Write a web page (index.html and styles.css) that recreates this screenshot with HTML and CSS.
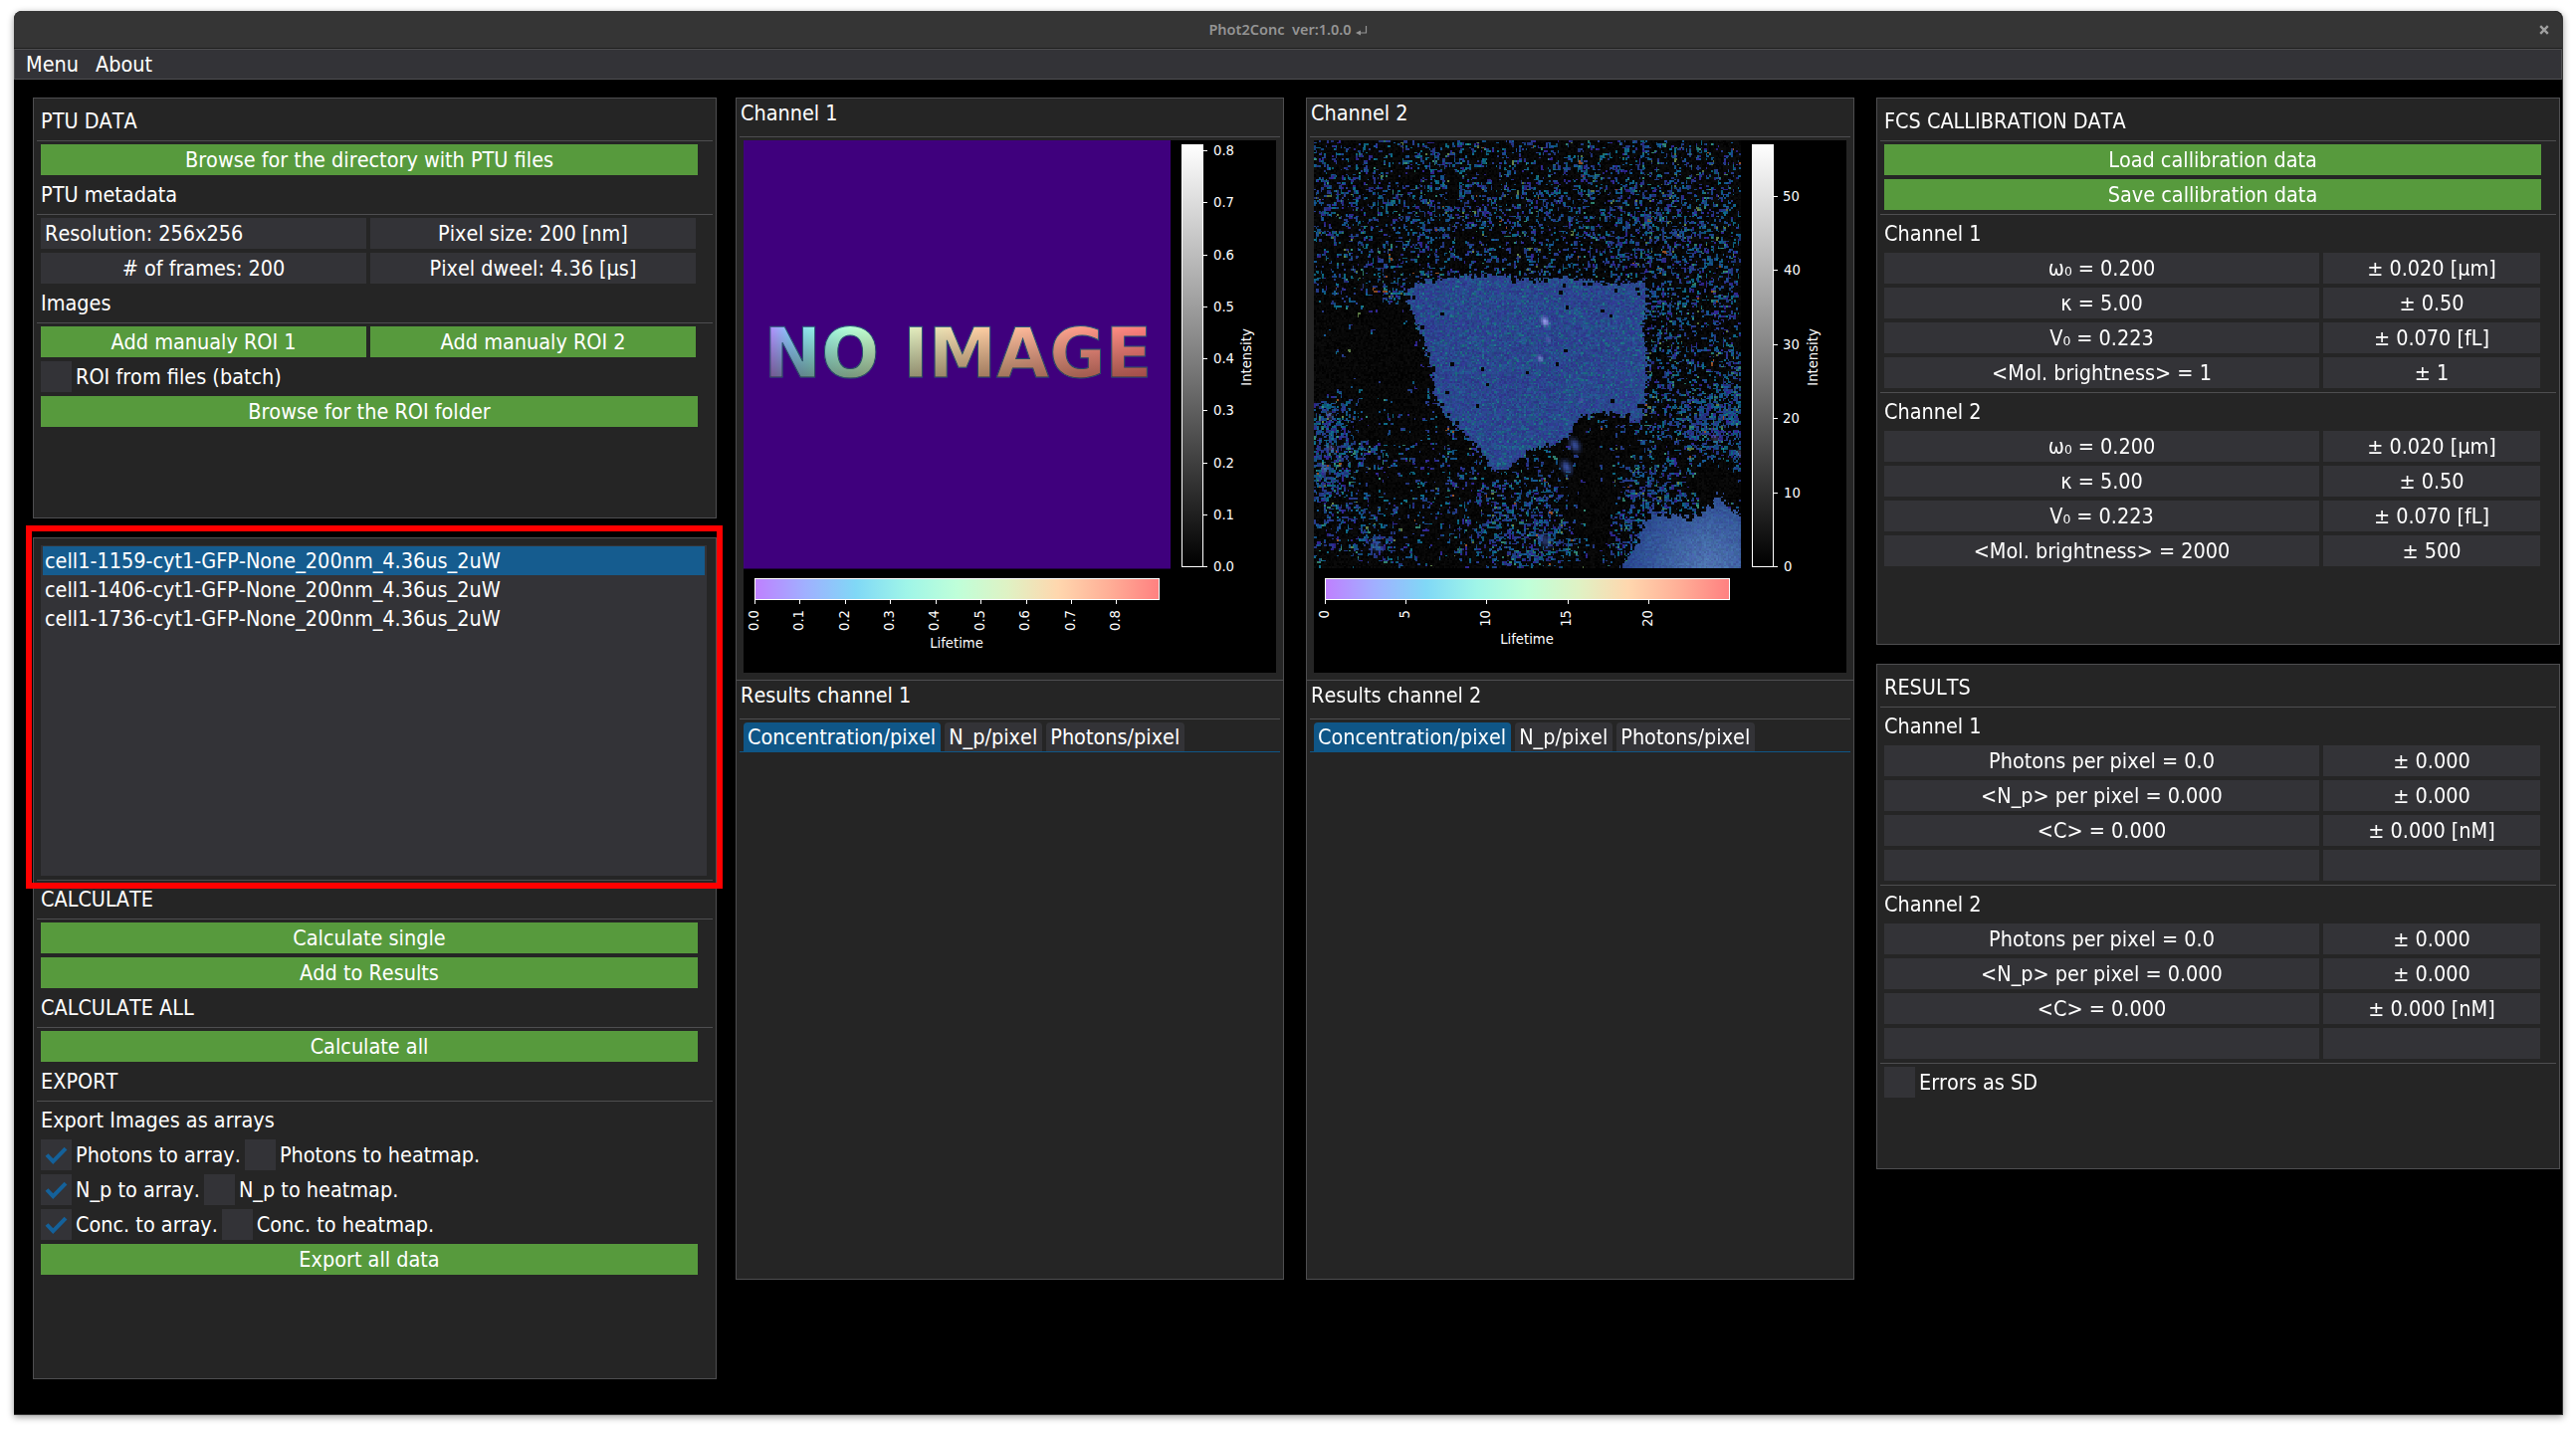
FILE: index.html
```html
<!DOCTYPE html>
<html lang="en">
<head>
<meta charset="utf-8">
<title>Phot2Conc</title>
<link rel="stylesheet" href="styles.css">
</head>
<body>
<div class="window">
  <header class="titlebar">
    <span class="title">Phot2Conc&nbsp; ver:1.0.0</span>
    <svg class="enter" width="12" height="12" viewBox="0 0 12 12"><path d="M10.5 1v7H3" fill="none" stroke="#949494" stroke-width="1.2"/><path d="M0 8l5-2.6v5.2z" fill="#949494"/></svg>
    <svg class="close" width="10" height="10" viewBox="0 0 10 10"><path d="M1.2 1.2l7.6 7.6M8.8 1.2L1.2 8.8" stroke="#a0a0a0" stroke-width="2.4"/></svg>
  </header>
  <nav class="menubar"><span>Menu</span><span>About</span></nav>
  <main class="workspace">
    <div class="column side left">
      <section class="panel ptu">
        <div class="label">PTU DATA</div>
        <hr>
        <button class="btn">Browse for the directory with PTU files</button>
        <div class="label">PTU metadata</div>
        <hr>
        <div class="row halves"><div class="cell start">Resolution: 256x256</div><div class="cell">Pixel size: 200 [nm]</div></div>
        <div class="row halves"><div class="cell"># of frames: 200</div><div class="cell">Pixel dweel: 4.36 [µs]</div></div>
        <div class="label">Images</div>
        <hr>
        <div class="row halves"><button class="btn">Add manualy ROI 1</button><button class="btn">Add manualy ROI 2</button></div>
        <div class="checks"><i class="box"></i><span>ROI from files (batch)</span></div>
        <button class="btn">Browse for the ROI folder</button>
      </section>
      <section class="panel files">
        <ul class="list">
          <li class="selected">cell1-1159-cyt1-GFP-None_200nm_4.36us_2uW</li>
          <li>cell1-1406-cyt1-GFP-None_200nm_4.36us_2uW</li>
          <li>cell1-1736-cyt1-GFP-None_200nm_4.36us_2uW</li>
        </ul>
        <hr>
        <div class="label">CALCULATE</div>
        <hr>
        <button class="btn">Calculate single</button>
        <button class="btn">Add to Results</button>
        <div class="label">CALCULATE ALL</div>
        <hr>
        <button class="btn">Calculate all</button>
        <div class="label">EXPORT</div>
        <hr>
        <div class="label">Export Images as arrays</div>
        <div class="checks"><i class="box"><svg viewBox="0 0 31 31"><path d="M6 15.5l6.3 6.7L25 9.2" /></svg></i><span>Photons to array.</span><i class="box"></i><span>Photons to heatmap.</span></div>
        <div class="checks"><i class="box"><svg viewBox="0 0 31 31"><path d="M6 15.5l6.3 6.7L25 9.2" /></svg></i><span>N_p to array.</span><i class="box"></i><span>N_p to heatmap.</span></div>
        <div class="checks"><i class="box"><svg viewBox="0 0 31 31"><path d="M6 15.5l6.3 6.7L25 9.2" /></svg></i><span>Conc. to array.</span><i class="box"></i><span>Conc. to heatmap.</span></div>
        <button class="btn">Export all data</button>
      </section>
      <div class="highlight"></div>
    </div>

    <div class="column center">
      <section class="panel channel">
        <div class="label">Channel 1</div>
        <hr>
        <div class="plot">
          <svg width="535" height="535" viewBox="0 0 535 535">
            <defs>
              <linearGradient id="life"><stop offset="0" stop-color="#bf80ff"/><stop offset=".125" stop-color="#a0b0ff"/><stop offset=".25" stop-color="#80d8f6"/><stop offset=".375" stop-color="#9ff5e8"/><stop offset=".5" stop-color="#bfffd9"/><stop offset=".625" stop-color="#dff2c4"/><stop offset=".75" stop-color="#ffd7ae"/><stop offset=".875" stop-color="#ffaf97"/><stop offset="1" stop-color="#ff8080"/></linearGradient>
              <linearGradient id="gray" x2="0" y2="1"><stop offset="0" stop-color="#fff"/><stop offset="1" stop-color="#000"/></linearGradient>
              <linearGradient id="word" gradientUnits="userSpaceOnUse" x1="22" x2="408" y1="0" y2="0"><stop offset="0" stop-color="#bf80ff"/><stop offset=".06" stop-color="#8cc8fa"/><stop offset=".12" stop-color="#92ecea"/><stop offset=".2" stop-color="#b0ffdc"/><stop offset=".26" stop-color="#c4ffd0"/><stop offset=".38" stop-color="#e3efc0"/><stop offset=".56" stop-color="#ffd0a4"/><stop offset=".7" stop-color="#ffb498"/><stop offset=".84" stop-color="#ff9888"/><stop offset="1" stop-color="#ff7c7c"/></linearGradient>
              <linearGradient id="dim" gradientUnits="userSpaceOnUse" x1="0" x2="0" y1="187" y2="238"><stop offset="0" stop-color="#000" stop-opacity="0"/><stop offset="1" stop-color="#200800" stop-opacity=".42"/></linearGradient>
            </defs>
            <rect width="429" height="430.5" fill="#3f007d"/>
            <g class="noimage"><text x="20.5" y="237.5" textLength="390" lengthAdjust="spacingAndGlyphs" fill="url(#word)" stroke="#2b5c78" stroke-width="1">NO IMAGE</text></g>
            <g class="noimage" aria-hidden="true"><text x="20.5" y="237.5" textLength="390" lengthAdjust="spacingAndGlyphs" fill="url(#dim)">NO IMAGE</text></g>
            <rect x="440.5" y="4.5" width="21" height="424" fill="url(#gray)" stroke="#fff"/>
            <path class="tick" d="M462 10.5h4M462 62.5h4M462 115.5h4M462 167.5h4M462 219.5h4M462 271.5h4M462 324.5h4M462 376.5h4M462 428.5h4"/>
            <g class="axis">
              <text x="472" y="15">0.8</text><text x="472" y="67">0.7</text><text x="472" y="120">0.6</text><text x="472" y="172">0.5</text><text x="472" y="224">0.4</text><text x="472" y="276">0.3</text><text x="472" y="329">0.2</text><text x="472" y="381">0.1</text><text x="472" y="433">0.0</text>
              <text class="mid" transform="translate(510 218) rotate(-90)">Intensity</text>
              <text class="mid" x="214" y="510">Lifetime</text>
            </g>
            <rect x="11.5" y="440.5" width="406" height="21" fill="url(#life)" stroke="#fff"/>
            <path class="tick" d="M11.5 462v4M56.5 462v4M102.5 462v4M147.5 462v4M193.5 462v4M238.5 462v4M284.5 462v4M329.5 462v4M374.5 462v4"/>
            <g class="axis end">
              <text transform="translate(15 472) rotate(-90)">0.0</text><text transform="translate(60 472) rotate(-90)">0.1</text><text transform="translate(106 472) rotate(-90)">0.2</text><text transform="translate(151 472) rotate(-90)">0.3</text><text transform="translate(196 472) rotate(-90)">0.4</text><text transform="translate(242 472) rotate(-90)">0.5</text><text transform="translate(287 472) rotate(-90)">0.6</text><text transform="translate(333 472) rotate(-90)">0.7</text><text transform="translate(378 472) rotate(-90)">0.8</text>
            </g>
          </svg>
        </div>
      </section>
      <section class="panel outcome">
        <div class="label">Results channel 1</div>
        <hr>
        <div class="tabs"><span class="tab active">Concentration/pixel</span><span class="tab">N_p/pixel</span><span class="tab">Photons/pixel</span></div>
      </section>
    </div>

    <div class="column center">
      <section class="panel channel">
        <div class="label">Channel 2</div>
        <hr>
        <div class="plot">
          <svg width="535" height="535" viewBox="0 0 535 535">
            <rect x="440.5" y="4.5" width="21" height="424" fill="url(#gray)" stroke="#fff"/>
            <path class="tick" d="M462 56.5h4M462 130.5h4M462 205.5h4M462 279.5h4M462 354.5h4M462 428.5h4"/>
            <g class="axis">
              <text x="471" y="61">50</text><text x="472" y="135">40</text><text x="471" y="210">30</text><text x="471" y="284">20</text><text x="472" y="359">10</text><text x="472" y="433">0</text>
              <text class="mid" transform="translate(506 218) rotate(-90)">Intensity</text>
              <text class="mid" x="214" y="506">Lifetime</text>
            </g>
            <rect x="11.5" y="440.5" width="406" height="21" fill="url(#life)" stroke="#fff"/>
            <path class="tick" d="M11.5 462v4M92.5 462v4M173.5 462v4M255.5 462v4M336.5 462v4"/>
            <g class="axis end">
              <text transform="translate(15 472) rotate(-90)">0</text><text transform="translate(96 472) rotate(-90)">5</text><text transform="translate(177 472) rotate(-90)">10</text><text transform="translate(258 472) rotate(-90)">15</text><text transform="translate(340 472) rotate(-90)">20</text>
            </g>
          </svg>
          <canvas id="cells" class="cells" width="256" height="256"></canvas>
        </div>
      </section>
      <section class="panel outcome">
        <div class="label">Results channel 2</div>
        <hr>
        <div class="tabs"><span class="tab active">Concentration/pixel</span><span class="tab">N_p/pixel</span><span class="tab">Photons/pixel</span></div>
      </section>
    </div>

    <div class="column side right">
      <section class="panel fcs">
        <div class="label">FCS CALLIBRATION DATA</div>
        <hr>
        <button class="btn">Load callibration data</button>
        <button class="btn">Save callibration data</button>
        <hr>
        <div class="label">Channel 1</div>
        <div class="row pair"><div class="cell">ω₀ = 0.200</div><div class="cell">± 0.020 [µm]</div></div>
        <div class="row pair"><div class="cell">κ = 5.00</div><div class="cell">± 0.50</div></div>
        <div class="row pair"><div class="cell">V₀ = 0.223</div><div class="cell">± 0.070 [fL]</div></div>
        <div class="row pair"><div class="cell">&lt;Mol. brightness&gt; = 1</div><div class="cell">± 1</div></div>
        <hr>
        <div class="label">Channel 2</div>
        <div class="row pair"><div class="cell">ω₀ = 0.200</div><div class="cell">± 0.020 [µm]</div></div>
        <div class="row pair"><div class="cell">κ = 5.00</div><div class="cell">± 0.50</div></div>
        <div class="row pair"><div class="cell">V₀ = 0.223</div><div class="cell">± 0.070 [fL]</div></div>
        <div class="row pair"><div class="cell">&lt;Mol. brightness&gt; = 2000</div><div class="cell">± 500</div></div>
      </section>
      <section class="panel results">
        <div class="label">RESULTS</div>
        <hr>
        <div class="label">Channel 1</div>
        <div class="row pair"><div class="cell">Photons per pixel = 0.0</div><div class="cell">± 0.000</div></div>
        <div class="row pair"><div class="cell">&lt;N_p&gt; per pixel = 0.000</div><div class="cell">± 0.000</div></div>
        <div class="row pair"><div class="cell">&lt;C&gt; = 0.000</div><div class="cell">± 0.000 [nM]</div></div>
        <div class="row pair"><div class="cell"></div><div class="cell"></div></div>
        <hr>
        <div class="label">Channel 2</div>
        <div class="row pair"><div class="cell">Photons per pixel = 0.0</div><div class="cell">± 0.000</div></div>
        <div class="row pair"><div class="cell">&lt;N_p&gt; per pixel = 0.000</div><div class="cell">± 0.000</div></div>
        <div class="row pair"><div class="cell">&lt;C&gt; = 0.000</div><div class="cell">± 0.000 [nM]</div></div>
        <div class="row pair"><div class="cell"></div><div class="cell"></div></div>
        <hr>
        <div class="checks"><i class="box"></i><span>Errors as SD</span></div>
      </section>
    </div>
  </main>
</div>
<script src="cells.js"></script>
</body>
</html>
```
FILE: styles.css
```css
* { box-sizing: border-box; }

body {
  margin: 0;
  padding: 11px 13px 15px 14px;
  background: #fff;
  color: #fff;
  font-family: "DejaVu Sans Condensed", "DejaVu Sans", sans-serif;
  font-stretch: condensed;
  font-size: 21.45px;
  font-kerning: none;
  line-height: 25px;
  white-space: nowrap;
}

.window {
  height: 1411px;
  border: 1px solid #353535;
  border-width: 0 1px 1px 0;
  border-radius: 8px 8px 0 0;
  background: #000;
  box-shadow: 0 2px 7px rgba(0, 0, 0, .4);
}

.titlebar {
  position: relative;
  display: flex;
  align-items: center;
  justify-content: center;
  gap: 4px;
  height: 38px;
  border-bottom: 1px solid #1e1e1e;
  border-radius: 8px 8px 0 0;
  background: #353535;
  color: #949494;
  font: 600 14.5px/37px "Noto Sans", sans-serif;
}
.enter { margin-top: 2px; }
.close { position: absolute; right: 13px; top: 14px; }

.menubar {
  display: flex;
  gap: 17px;
  height: 31px;
  padding: 2px 11px;
  border: 1px solid #4e4e50;
  background: #333337;
}

.workspace { display: flex; padding: 18px 0 0 19px; }
.column { display: flex; flex-direction: column; flex: none; }
.side { width: 687px; }
.center { width: 551px; }
.left { position: relative; gap: 19px; margin-right: 19px; }
.center { margin-right: 22px; }
.right { gap: 19px; }

.panel {
  display: flex;
  flex-direction: column;
  align-items: flex-start;
  gap: 4px;
  padding: 7px 3px;
  border: 1px solid #4e4e50;
  background: #252525;
}
.ptu { height: 423px; }
.files { height: 846px; }
.fcs { height: 550px; }
.results { height: 508px; }

hr {
  align-self: stretch;
  margin: 0 0 -1px;
  border: 0;
  border-top: 1px solid #4e4e50;
}

.label { height: 31px; padding: 3px 0; margin-left: 4px; }
.btn, .cell {
  width: 660px;
  height: 31px;
  margin: 0 0 0 4px;
  padding: 3px 4px;
  border: 0;
  font: inherit;
  font-kerning: none;
  color: #fff;
  text-align: center;
}
.btn { background: #579a3d; }
.cell { background: #333337; }
.start { text-align: left; }
.row { display: grid; gap: 4px; margin-left: 4px; }
.row > * { width: auto; margin: 0; }
.halves { grid-template-columns: 327px 327px; }
.pair { grid-template-columns: 437px 218px; }

.checks { display: flex; gap: 4px; margin-left: 4px; line-height: 31px; }
.box { width: 31px; height: 31px; background: #333337; }
.box svg { display: block; width: 31px; height: 31px; fill: none; stroke: #14619a; stroke-width: 4; }

.list {
  width: 669px;
  height: 332px;
  margin: 0 0 0 4px;
  padding: 1px 2px;
  list-style: none;
  background: #333337;
}
.list li { height: 29px; padding: 2px; }
.list .selected { background: #155c8f; }

.highlight {
  position: absolute;
  left: -7px;
  top: 430px;
  width: 700px;
  height: 365px;
  border: 6px solid #f00;
}

.channel { height: 586px; padding-top: 3px; }
.outcome { height: 603px; margin-top: -1px; padding-top: 3px; }
.center .label { padding-top: 0; margin-left: 1px; line-height: 23px; }

.plot {
  display: grid;
  width: 535px;
  height: 535px;
  margin-left: 4px;
  background: #000;
}
.plot > * { grid-area: 1 / 1; }
.plot svg { display: block; }
.cells { width: 429px; height: 430px; image-rendering: pixelated; }
.noimage { font: bold 70px "DejaVu Sans", sans-serif; font-stretch: normal; }
.tick { stroke: #fff; fill: none; }
.axis { font: 13.2px "DejaVu Sans", sans-serif; font-stretch: normal; fill: #fff; }
.end { text-anchor: end; }
.mid { text-anchor: middle; }

.tabs {
  display: flex;
  align-self: stretch;
  gap: 4px;
  height: 30px;
  padding-left: 4px;
  border-bottom: 1px solid #0f5687;
}
.tab { height: 29px; padding: 2px 5px 2px 4px; border-radius: 4px 4px 0 0; background: #333337; }
.active { background: #0f5687; }
```
FILE: cells.js
```js
// Photon lifetime map: sparse background counts, two bright cells and small bright spots.
(function () {
  var N = 256, seed = 4127;
  function rnd() {
    seed = (seed + 0x6D2B79F5) | 0;
    var t = Math.imul(seed ^ (seed >>> 15), 1 | seed);
    t = (t + Math.imul(t ^ (t >>> 7), 61 | t)) ^ t;
    return ((t ^ (t >>> 14)) >>> 0) / 4294967296;
  }
  var ctx = document.getElementById('cells').getContext('2d');
  var img = ctx.createImageData(N, N), d = img.data;
  function put(x, y, c, k) {
    if (x < 0 || y < 0 || x >= N || y >= N) return;
    var i = (y * N + x) * 4;
    d[i] = c[0] * k; d[i + 1] = c[1] * k; d[i + 2] = c[2] * k; d[i + 3] = 255;
  }
  function inside(p, x, y) {
    var r = false;
    for (var i = 0, j = p.length - 1; i < p.length; j = i++) {
      var a = p[i], b = p[j];
      if ((a[1] > y) !== (b[1] > y) && x < (b[0] - a[0]) * (y - a[1]) / (b[1] - a[1]) + a[0]) r = !r;
    }
    return r;
  }
  var main = [[54,91],[58,85],[81,81],[105,79],[129,83],[151,81],[176,85],[199,84],[200,94],[197,110],[200,134],[198,163],[193,169],[187,165],[174,163],[160,165],[151,178],[143,182],[129,185],[116,197],[108,197],[101,189],[94,180],[79,165],[72,155],[70,136],[63,115],[55,96]];
  var corner = [[182,257],[193,241],[200,221],[213,223],[226,225],[237,218],[242,210],[249,220],[257,224],[257,257]];

  // Ellipses [x, y, rx, ry, weight] that raise or lower the background coverage.
  var fields = [
    [128,38,190,46,.22],[225,75,45,60,.16],[20,125,50,32,-.14],[215,140,22,70,.08],
    [8,165,14,10,1.2],[6,193,13,17,1.3],[28,184,9,5,.6],[240,168,18,17,.95],[252,148,9,24,.6],[255,184,4,14,1.3],
    [90,180,14,24,.1],[85,205,20,16,.1],[30,232,50,25,.14],[125,225,32,24,.3],[140,240,18,10,.5],[115,245,14,8,.4],
    [203,180,18,36,.14],[205,213,20,12,.5],[190,238,12,18,.35],[10,10,24,80,.05],
    [175,190,14,22,-.06],[238,202,20,12,-.18],[168,226,14,22,-.2],[66,235,20,14,-.1],
    [32,85,45,22,.1],[138,213,8,5,.6],[36,242,9,6,.8],[204,102,12,55,.14],[50,92,5,4,.8]
  ];
  function cover(x, y) {
    var v = .075;
    fields.forEach(function (f) {
      var a = (x - f[0]) / f[2], b = (y - f[1]) / f[3];
      v += f[4] * Math.exp(-(a * a + b * b));
    });
    return Math.max(v, .01);
  }
  function tint() {
    var r = rnd();
    if (r < .33) return [36, 57, 134];
    if (r < .55) return [19, 83, 138];
    if (r < .74) return [13, 104, 130];
    if (r < .91) return [47, 37, 142];
    if (r < .972) return [48, 132, 112];
    if (r < .992) return [94, 125, 70];
    return [148, 78, 38];
  }
  var x, y, k;
  for (y = 0; y < N; y++) for (x = 0; x < N; x++) {
    k = rnd() * 12; put(x, y, [k, k, k], 1);
  }
  for (k = 0; k < 28000; k++) {
    x = Math.floor(rnd() * N); y = Math.floor(rnd() * N);
    if (rnd() > cover(x, y) * 1.12) continue;
    var n = 1 + Math.floor(rnd() * rnd() * 8);
    var base = tint();
    while (n--) {
      put(x, y, rnd() < .6 ? base : tint(), .85 + rnd() * .25);
      if (rnd() < .5) x += rnd() < .5 ? 1 : -1; else y += rnd() < .5 ? 1 : -1;
    }
  }
  for (y = 0; y < N; y++) for (x = 0; x < N; x++) {
    var jx = x + (rnd() - .5) * 3, jy = y + (rnd() - .5) * 3;
    if (inside(main, jx, jy)) {
      var m = rnd();
      put(x, y, m < .45 ? [43, 73, 144] : m < .75 ? [48, 57, 145] : m < .93 ? [33, 90, 142] : [28, 112, 132], .9 + rnd() * .17);
    } else if (inside(corner, jx, jy)) {
      var g = Math.max(0, 1 - Math.hypot(x - 236, y - 254) / 52);
      put(x, y, [38 + 40 * g, 70 + 45 * g + rnd() * 20 - 10, 140 + 36 * g], .93 + rnd() * .14);
    }
  }
  // Dark gaps: scattered holes and a fringe along the cell outline.
  function hole(x, y) {
    for (var a = 0; a < 2; a++) for (var b = 0; b < 2; b++) put(x + a, y + b, [6, 6, 6], 1);
  }
  [[76,103],[147,90],[151,99],[172,101],[177,104],[82,133],[100,136],[127,138],[103,145],[150,125],[145,133],[79,150],[97,158],[178,155],[59,93],[149,86],[193,88],[194,91],[76,157],[119,84],[165,85],[180,89],[138,83],[194,158],[196,158]].forEach(function (p) { hole(p[0], p[1]); });
  [main, corner].forEach(function (poly) {
    poly.forEach(function (p, i) {
      var q = poly[(i + 1) % poly.length], len = Math.hypot(q[0] - p[0], q[1] - p[1]);
      for (var s = 0; s < len; s += 3) {
        if (rnd() > .6) continue;
        var t = s / len;
        var hx = Math.round(p[0] + (q[0] - p[0]) * t + rnd() * 4 - 2), hy = Math.round(p[1] + (q[1] - p[1]) * t + rnd() * 4 - 2);
        if (hy < 252 && hx < 253) hole(hx, hy);
      }
    });
  });
  // Bright aggregates.
  [[138,108,2.1,.85],[140,119,1.6,.25],[135,130,1.7,.5],[160,155,2,.15],[10,184,2,.35],[6,196,2.5,.25],[9,164,2,.3],[240,178,2.5,.25],[255,187,2,.35]].forEach(function (s) {
    glow(s, [165, 160, 245]);
  });
  // Small islands in the gap between the cells.
  [[156,182,3,.9],[151,195,3,.95],[138,239,3.5,.6],[37,242,3,.6]].forEach(function (s) {
    glow(s, [58, 82, 165]);
  });
  function glow(s, c) {
    for (var b = -6; b <= 6; b++) for (var a = -6; a <= 6; a++) {
      var X = s[0] + a, Y = s[1] + b;
      if (X < 0 || Y < 0 || X >= N || Y >= N) continue;
      var w = s[3] * Math.exp(-(a * a + b * b * .7 - a * b * .5) / (s[2] * s[2])), i = (Y * N + X) * 4;
      if (w < .08) continue;
      for (var j = 0; j < 3; j++) d[i + j] += (c[j] - d[i + j]) * w;
    }
  }
  ctx.putImageData(img, 0, 0);
})();
```
